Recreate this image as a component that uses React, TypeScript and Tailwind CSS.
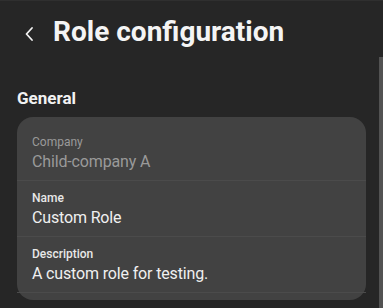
import React from "react";

function Row({ label, value, disabled }: { label: string; value: string; disabled?: boolean }) {
  return (
    <div className="h-[56px] pt-[9px] px-[15px] border-b border-[#4b4b4b]">
      <div className={`text-[12px] leading-[16px] ${disabled ? "text-[#9a9a9a]" : "text-[#e8e8e8] font-medium"}`}>{label}</div>
      <div className={`text-[16px] leading-[24px] tracking-[-0.15px] ${disabled ? "text-[#9a9a9a]" : "text-[#f0f0f0]"}`}>{value}</div>
    </div>
  );
}

export default function App() {
  return (
    <div className="w-[383px] h-[308px] bg-[#262626] overflow-hidden relative border-t border-[#2f2f2f]" style={{ fontFamily: "Roboto, 'Noto Sans', sans-serif" }}>
      <div className="pt-[17px] flex items-center pl-[24px]">
        <svg width="10" height="16" viewBox="0 0 10 16" className="mr-[19px] mt-[3px]">
          <path d="M8 2 L2.5 8 L8 14" stroke="#f2f2f2" strokeWidth="1.8" fill="none" strokeLinecap="round" strokeLinejoin="round" />
        </svg>
        <h1 className="text-[28px] font-bold text-[#f4f4f4] leading-[28px]">Role configuration</h1>
      </div>
      <div className="absolute right-0 top-[56px] w-[4px] h-[252px] bg-[#525252]" />
      <div className="px-[17px] w-[383px]">
        <div className="mt-[40px] text-[17px] font-bold text-[#f2f2f2] leading-[24px]">General</div>
        <div className="mt-[7px] w-[349px] bg-[#424242] rounded-[16px] pt-[8px] pb-[7px]">
          <Row label="Company" value="Child-company A" disabled />
          <Row label="Name" value="Custom Role" />
          <Row label="Description" value="A custom role for testing." />
        </div>
      </div>
    </div>
  );
}
